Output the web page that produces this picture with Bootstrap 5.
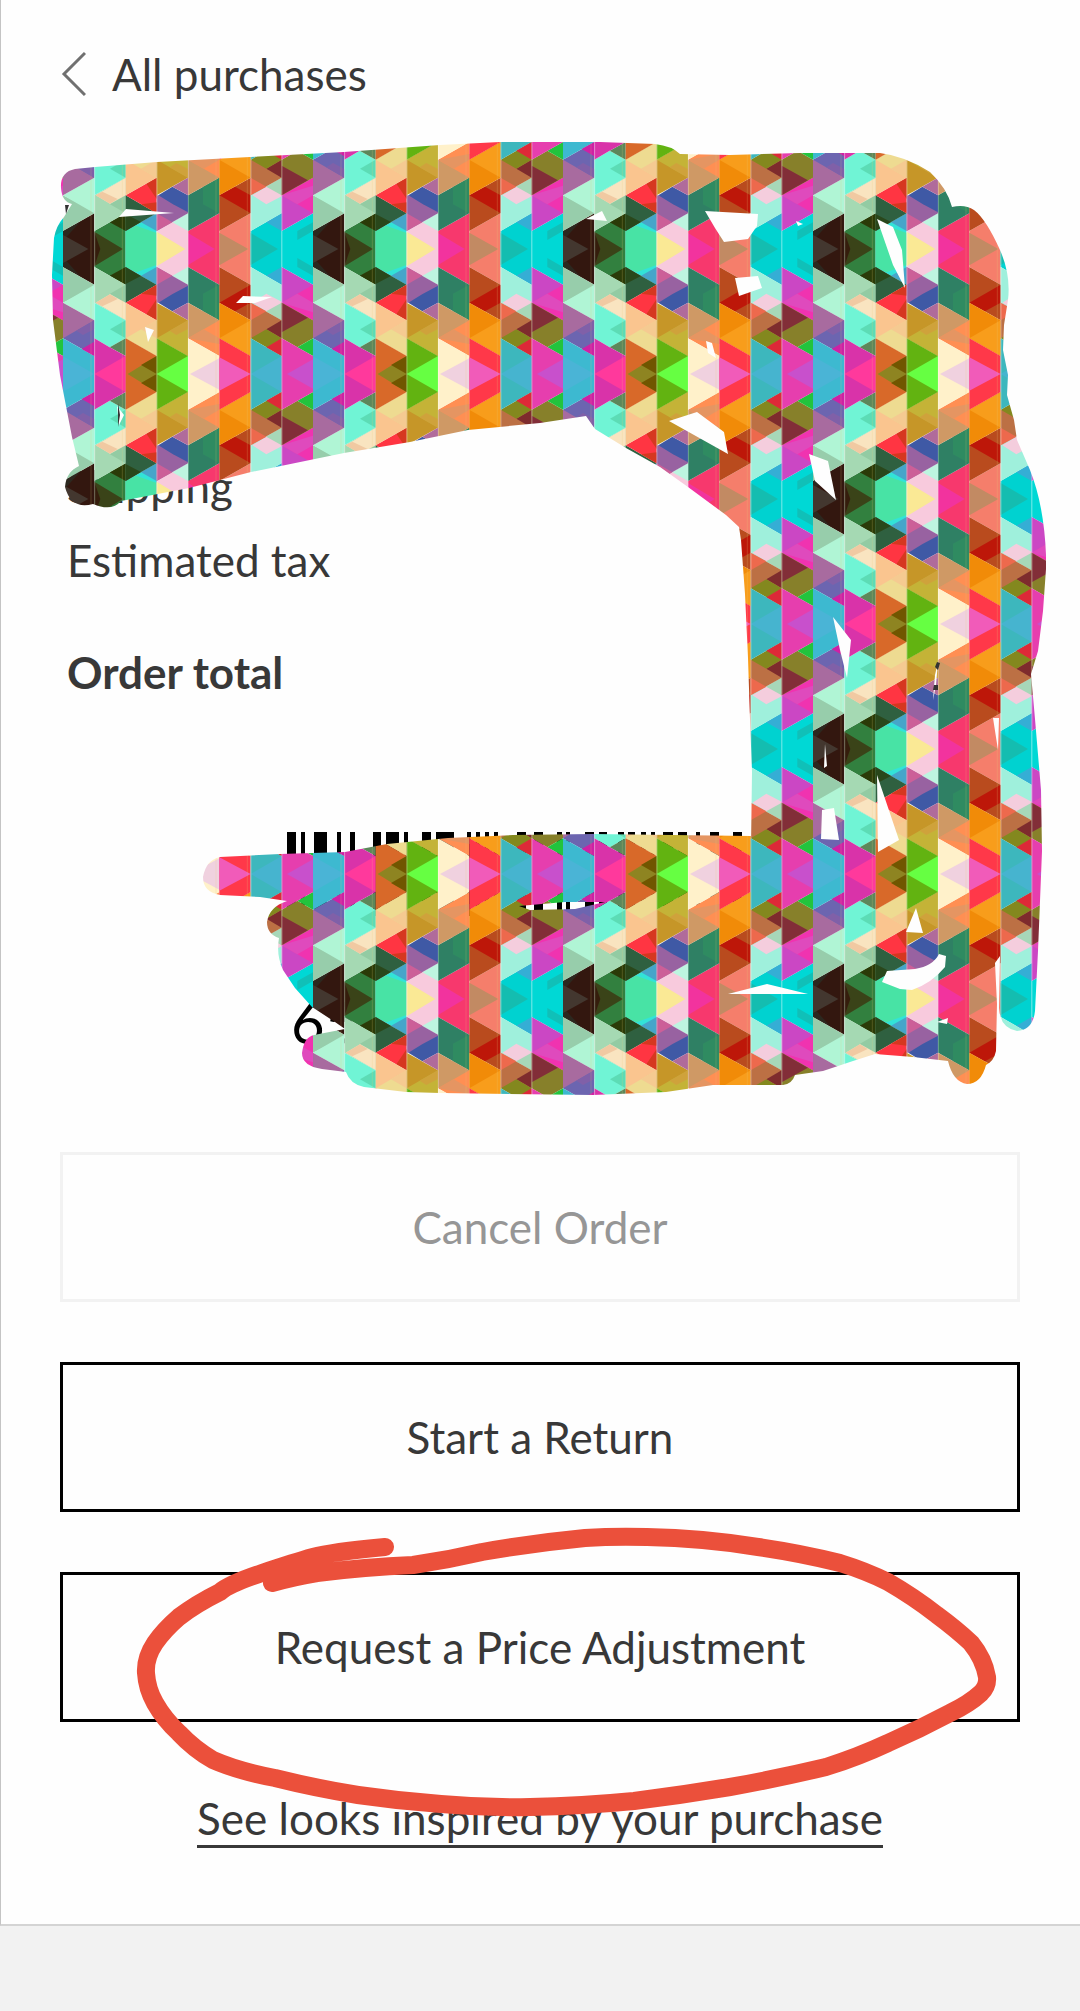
<!DOCTYPE html>
<html lang="en">
<head>
<meta charset="utf-8">
<meta name="viewport" content="width=device-width, initial-scale=1">
<title>Order details</title>
<link rel="stylesheet" href="https://cdn.jsdelivr.net/npm/bootstrap@5.3.0/dist/css/bootstrap.min.css">
<style>
body{background:#f2f2f2;color:#383838;font-family:Lato,"Open Sans",sans-serif;font-size:44px;line-height:56px}
.sheet{background:#fefefe;border-left:1px solid #c4c4c4;border-bottom:2px solid #d4d4d4;padding:46px 60px 76px 59px}
.back-link{color:#383838;gap:26px}
.summary{padding:356px 7px 0}
.summary-row{margin-bottom:18px}
.summary-total{padding-top:38px}
.pass{padding-top:132px;width:506px;margin:0 auto}
.pass-number{font-size:58px;line-height:72px;color:#000;padding:70px 0 94px 4px}
.actions{gap:60px}
.btn-order{--bs-btn-color:#383838;--bs-btn-bg:#fefefe;--bs-btn-border-color:#000;--bs-btn-disabled-color:#969696;--bs-btn-disabled-bg:#fefefe;--bs-btn-disabled-border-color:#f2f2f2;--bs-btn-disabled-opacity:1;--bs-btn-border-width:3px;--bs-btn-border-radius:0;--bs-btn-font-size:44px;--bs-btn-line-height:56px;--bs-btn-padding-y:44px}
.looks{padding-top:68px}
.looks-link{color:#383838;border-bottom:3px solid #383838;line-height:54px}
.doodle{pointer-events:none}
</style>
<script src="https://cdn.jsdelivr.net/npm/bootstrap@5.3.0/dist/js/bootstrap.bundle.min.js"></script>
</head>
<body>
<main class="sheet position-relative overflow-hidden">
  <header class="d-flex">
    <a href="#" class="back-link d-flex align-items-center text-decoration-none">
      <svg width="26" height="46" viewBox="0 0 26 46" fill="none" stroke="#707070" stroke-width="3" aria-hidden="true"><path d="M25 2 4 23 25 44"/></svg>
      <span>All purchases</span>
    </a>
  </header>

  <section class="summary">
    <div class="summary-row">Shipping</div>
    <div class="summary-row">Estimated tax</div>
    <div class="summary-total fw-bold">Order total</div>
  </section>

  <section class="pass">
    <svg class="d-block" width="460" height="84" viewBox="287 0 460 84" role="img" aria-label="Order barcode">
      <path d="M287 0h9v84h-9zM301 0h4v84h-4zM314 0h13v84h-13zM337 0h4v84h-4zM350 0h5v84h-5zM373 0h8v84h-8zM386 0h13v84h-13zM404 0h4v84h-4zM422 0h9v84h-9zM436 0h18v84h-18zM467 0h4v84h-4zM476 0h4v84h-4zM485 0h4v84h-4zM494 0h4v84h-4zM517 0h9v84h-9zM534 0h9v84h-9zM557 0h5v84h-5zM566 0h4v84h-4zM585 0h9v84h-9zM599 0h8v84h-8zM618 0h6v84h-6zM628 0h7v84h-7zM641 0h5v84h-5zM651 0h4v84h-4zM663 0h10v84h-10zM678 0h9v84h-9zM696 0h4v84h-4zM710 0h9v84h-9zM733 0h9v84h-9z"/>
    </svg>
    <div class="pass-number">65</div>
  </section>

  <div class="actions d-grid">
    <button type="button" class="btn btn-order" disabled>Cancel Order</button>
    <button type="button" class="btn btn-order">Start a Return</button>
    <button type="button" class="btn btn-order">Request a Price Adjustment</button>
  </div>
  <div class="looks text-center">
    <a href="#" class="looks-link d-inline-block text-decoration-none">See looks inspired by your purchase</a>
  </div>

  <!-- Marker strokes drawn over the page -->
  <svg class="doodle position-absolute top-0 start-0" width="1080" height="1880" viewBox="1 0 1080 1880" aria-hidden="true">
    <defs>
      <!-- Half a tile, mirrored to make the whole one -->
      <g id="half">
        <path fill="#33170f" d="M0 0H94V107L0 54z"/><path fill="#2c281f" d="M0 25V54L50 80z"/><path fill="#43372f" d="M0 0H76L0 42z"/>
        <path fill="#97cdab" d="M0 54 94 107V114L0 161z"/><path fill="#b0f5d5" d="M0 161 94 107V214z"/>
        <path fill="#a86b9f" d="M0 161 94 214V268H0z"/><path fill="#6c65b0" d="M0 268 94 214V321z"/><path fill="#8060a8" d="M40 245 94 214V240L60 258z"/>
        <path fill="#3db9d0" d="M0 268 94 321V375H0z"/><path fill="#4ab4d6" d="M0 322 94 375H0z"/><path fill="#cf20a5" d="M56 300 94 278V321z"/>

        <path fill="#32803f" d="M94 0H188V107L94 54z"/><path fill="#3a4318" d="M94 0H180L94 52z"/><path fill="#351d0c" d="M94 0H112L94 52z"/><path fill="#2b3b08" d="M140 80 188 54V107z"/>
        <path fill="#a5d9b3" d="M94 54 188 107V214L94 161z"/><path fill="#93cba3" d="M141 134 188 107V161z"/><path fill="#f9e4c0" d="M98 161 141 136 188 161V214z"/><path fill="#f1c9a2" d="M98 161 141 136 164 150 118 172z"/>
        <path fill="#70f4d5" d="M94 161 188 214V268L140 295 94 268z"/><path fill="#5cdcb5" d="M141 241 188 214V268z"/><path fill="#5c875a" d="M140 295 188 268V321z"/>
        <path fill="#d933a9" d="M94 268 140 295 188 321V375H94z"/><path fill="#ff399c" d="M94 375 188 321V375z"/>

        <path fill="#32e3d8" d="M188 0H281V107L188 54z"/><path fill="#48e3a5" d="M188 0H281V48L220 70 188 54z"/><path fill="#46a5ca" d="M234 80 281 54V107z"/>
        <path fill="#2f6040" d="M188 54 281 107 188 161z"/><path fill="#29471b" d="M188 54 234 81 188 105z"/><path fill="#ff3542" d="M188 161 281 107V214z"/><path fill="#d63720" d="M250 196 281 150V214zM234 134 281 107V140z"/>
        <path fill="#fac58f" d="M188 161 281 214V321L188 268z"/><path fill="#eedb91" d="M188 268 281 214V321z"/><path fill="#f5ca91" d="M234 241 281 214V268z"/>
        <path fill="#d86929" d="M188 268 281 321V375H188z"/><path fill="#8e8421" d="M194 375 281 321V375z"/><path fill="#705600" d="M234 348 281 321V375z"/>

        <path fill="#f8cadd" d="M281 0H375V107L281 54z"/><path fill="#bdf5e0" d="M328 80 375 54V107z"/><path fill="#fae995" d="M281 0H367L281 52z"/>
        <path fill="#9862a1" d="M281 54 375 107V161H281z"/><path fill="#cc5f98" d="M281 54 328 80 281 107z"/><path fill="#3f59a5" d="M286 161 330 134 375 110V161L328 187z"/>
        <path fill="#c69628" d="M281 161 375 214V321L281 268z"/><path fill="#b06b9b" d="M328 187 375 161V214z"/><path fill="#c4b337" d="M281 268 375 214V321z"/><path fill="#cfa23b" d="M320 245 375 214V240L340 258z"/>
        <path fill="#62b311" d="M281 268 375 321V375H281z"/><path fill="#66ff42" d="M281 375 375 321V375z"/>

        <path fill="#f7386d" d="M375 0H469V107L375 54z"/><path fill="#f2339e" d="M375 0H455L375 48z"/>
        <path fill="#2f8064" d="M375 54 469 107V214L375 161z"/><path fill="#2f8b61" d="M420 134 469 107V214L420 187z"/>
        <path fill="#cf9965" d="M375 161 469 214V268H375z"/><path fill="#ff8f53" d="M375 268 469 214V321z"/><path fill="#e59562" d="M375 268 422 241 469 268V285z"/>
        <path fill="#fff1ca" d="M375 268 469 321V375H375z"/><path fill="#f0d1df" d="M381 375 469 328V375z"/>

        <path fill="#f57e6b" d="M469 0H563V107L469 54z"/><path fill="#c28a63" d="M469 0H556L469 49z"/>
        <path fill="#b94b1e" d="M469 54 563 107V214L469 161z"/><path fill="#bd1709" d="M516 134 563 107V161L516 187 469 161z"/>
        <path fill="#f18b08" d="M469 161 563 214V321L469 268z"/><path fill="#f89d1b" d="M469 268 563 214V321z"/>
        <path fill="#ff3849" d="M469 268 563 321V375H469z"/><path fill="#f15bb9" d="M469 325 563 375H469z"/>

        <path fill="#00d2d0" d="M563 0H656V107L563 54z"/><path fill="#14bdb0" d="M563 0H645L563 48z"/><path fill="#35aed5" d="M610 80 656 54V107z"/>
        <path fill="#9ff0dc" d="M563 54 656 107V214L563 161z"/><path fill="#f4cddd" d="M568 161 610 134 656 158V175L610 187z"/><path fill="#a7d7b8" d="M610 187 656 161V214z"/>
        <path fill="#bc7044" d="M563 161 656 214V268H563z"/><path fill="#ed694d" d="M563 161 610 187 563 214z"/><path fill="#7e2b2d" d="M610 241 656 214V268z"/><path fill="#83881e" d="M563 268 610 241 656 268V321z"/>
        <path fill="#3db7bd" d="M563 268 656 321V375H563z"/><path fill="#46b4cf" d="M563 375 656 321V375z"/><path fill="#dd2938" d="M610 295 656 268V321z"/>

        <path fill="#00d8d5" d="M656 0H750V107L656 54z"/><path fill="#10c0b8" d="M703 27 750 54V80L703 54z"/>
        <path fill="#cb47c4" d="M656 54 750 107V214L656 161z"/><path fill="#f033b0" d="M656 161 750 107V214z"/><path fill="#df4abd" d="M656 161 703 134 750 161V190z"/>
        <path fill="#87802a" d="M656 161 750 214V268L703 295 656 268z"/><path fill="#822e38" d="M656 161 735 206 656 250z"/><path fill="#22c43d" d="M703 295 750 268V321z"/>
        <path fill="#e63eae" d="M656 268 750 321V375H656z"/><path fill="#c850cc" d="M672 375 750 331V375z"/>
      </g>
      <pattern id="triangles" width="750" height="750" patternUnits="userSpaceOnUse" patternTransform="translate(63 249) scale(.33333)">
        <use href="#half"/>
        <use href="#half" transform="matrix(1 0 0 -1 0 750)"/>
        <path d="M95 0V750M282 0V750M376 0V750M564 0V750M657 0V750" stroke="#fff" stroke-opacity=".3" stroke-width="3"/>
        <path d="M84 0V750M178 0V750M459 0V750M553 0V750" stroke="#e8c878" stroke-opacity=".2" stroke-width="3"/>
      </pattern>
    </defs>
    <path fill="url(#triangles)" fill-rule="evenodd" d="M61 188Q60 172 75 169L95 167 157 162 250 157 344 152 440 145 500 142 600 142 655 144 Q672 146 680 154L730 155 800 153 880 153Q905 156 930 172 947 188 952 207 965 204 974 210 986 219 1000 250 1011 275 1008 300L1004 325 1003 350 1008 375 1007 395 1014 420 1017 440 1030 470Q1044 505 1046 555L1046 569 1043 611 1038 651 1031 674 1035 719 1041 790 1042 851 1038 951 1035 1011Q1033 1030 1017 1031 1000 1028 999 1008L1000 956 995 963 997 1004 996 1051Q994 1061 986 1065 981 1084 967 1084 953 1082 948 1061L913 1057 875 1054 853 1061 823 1071 795 1075Q792 1084 783 1085L713 1085 666 1092 593 1095 440 1093 406 1092 364 1087Q350 1084 346 1072L322 1069Q302 1066 302 1053 304 1037 314 1035L345 1029 335 1022 312 1007 295 988 283 970Q276 955 279 938 267 934 267 922 269 907 287 901L260 897 220 895Q203 892 203 877 206 860 220 857L280 854 345 852 387 844 448 838 513 835 593 834 751 836 752 772 750 719 748 658 745 594 741 540 739 527 726 515 688 487 660 467 626 448 595 429 586 416 540 423 468 430 410 442 344 453 251 472 189 488 121 501Q112 512 93 504 71 510 65 487 66 472 79 466L72 437 60 375 53 320 52 275 54 238Q56 226 64 217L72 204Q62 202 61 188z
      M119 217 126 209 174 213zM236 303 243 296 272 297 255 303zM145 327 154 330 148 342zM705 211 758 214 757 226 748 239 724 242 715 228zM735 278 758 276 762 288 739 296zM877 219 893 227 902 250 905 288 893 265zM669 421 697 412 724 432 728 454zM809 454 828 461 836 500 815 481zM833 617 851 640 847 678 840 650zM822 810 834 808 839 840 821 839zM877 775 899 840 878 852zM916 908 923 933 906 932zM887 971 915 969Q933 966 939 954L946 956 945 967Q932 983 912 990L900 989 882 982zM728 994 767 984 808 994zM937 1022 948 1018 947 1024zM938 662 936 685 933 700 935 675zM519 906 565 902 605 902 575 909 530 910zM825 744 827 766 824 768zM586 219 602 211 607 221zM706 341 712 343 716 358 708 353zM993 718 999 718 998 750zM796 221 803 224 798 226zM117 406 124 415 119 425z"/>
    <path fill="#333" d="M65 205h4l-3 9zM118 403l2 12-2 12zM937 662l3 1-2 7-3-3zM934 685h4v5h-5z"/>
    <path fill="none" stroke="#eb503b" stroke-width="18" stroke-linecap="round" stroke-linejoin="round" d="M385 1547Q331 1552 313 1557T262 1573 220 1592Q196 1604 179 1617Q164 1630 155 1643Q145 1658 146 1673Q147 1689 155 1703Q164 1719 179 1733Q194 1749 213 1760Q238 1771 275 1778Q315 1788 358 1795Q399 1801 441 1804Q485 1808 530 1807Q582 1806 634 1801Q682 1795 730 1787Q780 1778 826 1767Q858 1757 888 1743Q920 1729 950 1713Q969 1704 981 1693Q988 1686 987 1677Q984 1659 971 1643Q956 1629 937 1615Q914 1597 888 1582Q866 1571 840 1563Q800 1553 758 1547Q703 1538 647 1537Q615 1536 585 1538Q533 1543 482 1552Q448 1560 413 1565Q365 1567 317 1573Q293 1577 272 1583"/>
  </svg>
</main>
</body>
</html>
